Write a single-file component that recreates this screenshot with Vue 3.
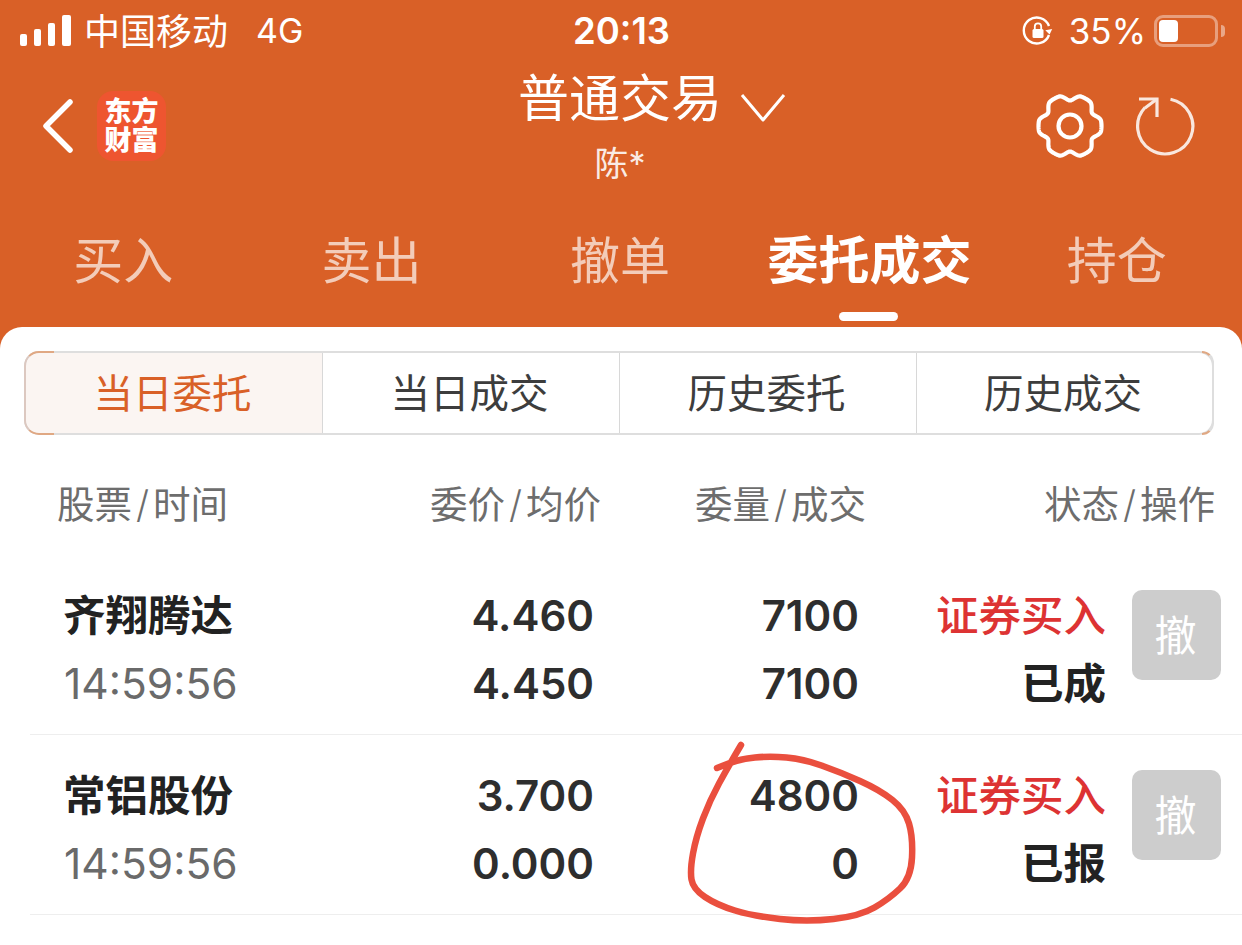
<script setup>
const tabs = [
  { label: '买入' },
  { label: '卖出' },
  { label: '撤单' },
  { label: '委托成交', active: true },
  { label: '持仓' },
]
const segments = ['当日委托', '当日成交', '历史委托', '历史成交']
const orders = [
  { name: '齐翔腾达', time: '14:59:56', price: '4.460', avg: '4.450', qty: '7100', done: '7100', type: '证券买入', status: '已成' },
  { name: '常铝股份', time: '14:59:56', price: '3.700', avg: '0.000', qty: '4800', done: '0', type: '证券买入', status: '已报' },
]

// gear outline: six flat topped teeth, sloping down to the valleys
const gearPath = (() => {
  const pts = []
  const step = Math.PI / 3
  for (let i = 0; i < 240; i++) {
    const a = (i / 240) * Math.PI * 2
    const d = Math.abs(a - Math.round(a / step) * step)
    const t = Math.min(1, Math.max(0, (Math.PI / 6 - d) / (Math.PI / 8.5)))
    const r = 25.5 + 6 * t * t * (3 - 2 * t)
    pts.push(`${(35 + r * Math.cos(a)).toFixed(2)} ${(35 + r * Math.sin(a)).toFixed(2)}`)
  }
  return 'M' + pts.join('L') + 'Z'
})()

// hand drawn ring, smoothed through the midpoints
const ringPoints = [[741, 745], [728, 767], [710, 800], [696, 837], [690, 870], [693, 889], [717, 905], [753, 916], [807, 922], [860, 916], [889, 899], [911, 878], [913, 837], [905, 810], [880, 790], [840, 772], [803, 759], [770, 756], [740, 759], [717, 768]]
const ringPath = ringPoints.reduce((d, p, i, all) => {
  if (i === 0) return `M${p[0]} ${p[1]}`
  if (i === all.length - 1) return `${d}L${p[0]} ${p[1]}`
  const next = all[i + 1]
  return `${d}Q${p[0]} ${p[1]} ${(p[0] + next[0]) / 2} ${(p[1] + next[1]) / 2}`
}, '')
</script>

<template>
  <div class="page">
    <header class="top">
      <div class="status-bar">
        <div class="status-left">
          <div class="signal"><i></i><i></i><i></i><i></i></div>
          <span class="carrier">中国移动</span>
          <span class="net">4G</span>
        </div>
        <div class="clock">20:13</div>
        <div class="status-right">
          <svg class="lock" width="32" height="32" viewBox="0 0 32 32">
            <path d="M27 20A13 13 0 1 1 27 11" fill="none" stroke="#fff" stroke-width="2.4" />
            <path d="M23.5 14.5h7l-3.5 5z" fill="#fff" transform="rotate(-10 27 16)" />
            <rect x="10.5" y="14" width="11" height="9" rx="1.5" fill="#fff" />
            <path d="M12.8 14v-2.4a3.2 3.2 0 0 1 6.4 0V14" fill="none" stroke="#fff" stroke-width="1.8" />
          </svg>
          <span class="percent">35%</span>
          <div class="battery"><div class="battery-fill"></div></div>
          <div class="battery-nub"></div>
        </div>
      </div>

      <div class="nav">
        <div class="nav-left">
          <svg class="back" width="34" height="56" viewBox="0 0 34 56">
            <path d="M29 4 5 28l24 24" fill="none" stroke="#fff" stroke-width="5.5" stroke-linecap="round" stroke-linejoin="round" />
          </svg>
          <div class="logo"><span class="logo-text">东方财富</span></div>
        </div>
        <div class="nav-title">
          <div class="title">
            普通交易
            <svg class="caret" width="48" height="32" viewBox="0 0 48 32">
              <path d="M3 3l21 25L45 3" fill="none" stroke="#fff" stroke-width="3" stroke-linejoin="round" />
            </svg>
          </div>
          <div class="account">陈*</div>
        </div>
        <div class="nav-right">
          <svg width="70" height="70" viewBox="0 0 70 70">
            <path :d="gearPath" fill="none" stroke="#fff" stroke-width="4.2" stroke-linejoin="round" />
            <circle cx="35" cy="35" r="11.5" fill="none" stroke="#fff" stroke-width="4.2" />
          </svg>
          <svg class="refresh" width="62" height="62" viewBox="0 0 62 62">
            <path d="M37.5 4.2A27.6 27.6 0 1 1 12 12.5" fill="none" stroke="#fff" stroke-width="3.2" />
            <path d="M6 4h18v18" fill="none" stroke="#fff" stroke-width="3.2" />
            <path d="M24 4 12 13" fill="none" stroke="#fff" stroke-width="3.2" />
          </svg>
        </div>
      </div>

      <nav class="tabs">
        <div v-for="tab in tabs" :key="tab.label" class="tab" :class="{ active: tab.active }">{{ tab.label }}</div>
      </nav>
    </header>

    <main class="card">
      <div class="segments">
        <div v-for="(seg, i) in segments" :key="seg" class="segment" :class="{ on: i === 0 }">{{ seg }}</div>
      </div>

      <div class="table-head">
        <div>股票<span class="slash">/</span>时间</div>
        <div class="r">委价<span class="slash">/</span>均价</div>
        <div class="r">委量<span class="slash">/</span>成交</div>
        <div class="r">状态<span class="slash">/</span>操作</div>
      </div>

      <div v-for="o in orders" :key="o.name" class="order">
        <div class="order-cols">
          <div>
            <div class="line name">{{ o.name }}</div>
            <div class="line time">{{ o.time }}</div>
          </div>
          <div class="r">
            <div class="line num">{{ o.price }}</div>
            <div class="line num">{{ o.avg }}</div>
          </div>
          <div class="r">
            <div class="line num">{{ o.qty }}</div>
            <div class="line num">{{ o.done }}</div>
          </div>
          <div class="r">
            <div class="line type">{{ o.type }}</div>
            <div class="line state">{{ o.status }}</div>
          </div>
          <div class="cancel">撤</div>
        </div>
      </div>
    </main>

    <svg class="ink" width="1242" height="945" viewBox="0 0 1242 945">
      <path :d="ringPath" fill="none" stroke="#ea4f3e" stroke-width="6.5" stroke-linecap="round" stroke-linejoin="round" />
    </svg>
  </div>
</template>

<style scoped>
.page {
  position: relative;
  width: 1242px;
  height: 945px;
  overflow: hidden;
  background: #d96027;
  font-family: Inter, "Noto Sans CJK SC", sans-serif;
  color: #222;
}

.top {
  height: 347px;
  margin-bottom: -20px;
  color: #fff;
}

.status-bar {
  display: grid;
  grid-template-columns: 1fr auto 1fr;
  align-items: center;
  height: 62px;
  padding: 0 17px 0 20px;
}

.status-left {
  display: flex;
  align-items: center;
}

.signal {
  display: flex;
  align-items: flex-end;
  gap: 7px;
  height: 32px;
  margin: 0 13px 3px 0;
}

.signal i {
  display: block;
  width: 7px;
  background: #fff;
  border-radius: 2px;
}

.signal i:nth-child(1) { height: 12px; }
.signal i:nth-child(2) { height: 17px; }
.signal i:nth-child(3) { height: 23px; }
.signal i:nth-child(4) { height: 31px; width: 9px; }

.carrier {
  font-size: 36px;
  line-height: 44px;
  padding-top: 2px;
}

.net {
  margin-left: 28px;
  font-size: 34px;
  line-height: 44px;
}

.clock {
  padding-right: 2px;
  font-size: 36.5px;
  font-weight: 600;
  line-height: 44px;
}

.status-right {
  display: flex;
  align-items: center;
  justify-content: flex-end;
}

.lock {
  margin-right: 15px;
}

.percent {
  font-size: 35px;
  line-height: 44px;
  margin-right: 8px;
}

.battery {
  width: 64px;
  height: 32px;
  padding: 2px;
  box-sizing: border-box;
  border: 3px solid rgba(255, 255, 255, 0.4);
  border-radius: 9px;
}

.battery-fill {
  width: 19px;
  height: 100%;
  background: #fff;
  border-radius: 4px;
}

.battery-nub {
  width: 4px;
  height: 12px;
  margin-left: 3px;
  background: rgba(255, 255, 255, 0.45);
  border-radius: 0 4px 4px 0;
}

.nav {
  display: grid;
  grid-template-columns: 1fr auto 1fr;
  height: 128px;
  padding: 0 47px 0 41px;
}

.nav-left {
  display: flex;
  align-items: center;
  height: 128px;
}

.nav-left .back {
  margin-right: 22px;
}

.logo {
  display: flex;
  justify-content: center;
  width: 69px;
  height: 70px;
  padding-top: 6px;
  box-sizing: border-box;
  background: #ee5530;
  border-radius: 16px;
}

.logo-text {
  width: 54px;
  text-align: center;
  font-size: 27px;
  font-weight: 900;
  line-height: 29px;
}

.nav-title {
  text-align: center;
  padding: 8px 0 0 4px;
}

.title {
  position: relative;
  font-size: 51px;
  font-weight: 400;
  line-height: 58px;
}

.caret {
  position: absolute;
  left: 221px;
  top: 22px;
}

.account {
  margin-top: 12px;
  font-size: 34px;
  line-height: 48px;
  opacity: 0.88;
}

.nav-right {
  display: flex;
  align-items: center;
  justify-content: flex-end;
  gap: 28px;
  height: 128px;
}

.refresh {
  opacity: 0.85;
}

.tabs {
  display: grid;
  grid-template-columns: repeat(5, 1fr);
  height: 137px;
}

.tab {
  position: relative;
  padding: 36px 2px 0 0;
  text-align: center;
  font-size: 50px;
  line-height: 70px;
  color: rgba(255, 255, 255, 0.68);
}

.tab.active {
  padding-right: 0;
  color: #fff;
  font-size: 51px;
  font-weight: 700;
}

.tab.active::after {
  content: "";
  position: absolute;
  left: 50%;
  top: 122px;
  width: 59px;
  height: 9px;
  margin-left: -30px;
  background: #fff;
  border-radius: 5px;
}

.card {
  position: relative;
  height: 618px;
  background: #fff;
  border-radius: 22px 22px 0 0;
  padding-top: 24px;
  box-sizing: border-box;
}

.segments {
  position: relative;
  display: grid;
  grid-template-columns: 296px 297px 297px 1fr;
  height: 84px;
  margin: 0 28px 0 24px;
  box-sizing: border-box;
  border: 2px solid #dedede;
  border-radius: 15px;
}

/* the rounded ends of the control carry the accent tint */
.segments::before,
.segments::after {
  content: "";
  position: absolute;
  top: -2px;
  bottom: -2px;
  border: 2px solid #e0a883;
  box-sizing: border-box;
  pointer-events: none;
}

.segments::before {
  left: -2px;
  width: 30px;
  border-right: 0;
  border-left-color: #dcc8c0;
  border-radius: 15px 0 0 15px;
}

.segments::after {
  right: -2px;
  width: 12px;
  border-left: 0;
  border-right-color: #dedede;
  border-radius: 0 15px 15px 0;
}

.segment {
  display: flex;
  align-items: center;
  justify-content: center;
  padding: 0 3px 5px 0;
  font-size: 39.5px;
  color: #3d3d3d;
  box-sizing: border-box;
  border-left: 1px solid #d8d8d8;
}

.segment:first-child {
  border-left: 0;
  border-radius: 14px 0 0 14px;
}

.segment.on {
  background: #fbf5f2;
  color: #d96027;
}

.table-head {
  display: grid;
  grid-template-columns: 344px 200px 265px 349px;
  height: 120px;
  padding: 48px 0 0 57px;
  box-sizing: border-box;
  font-size: 37.5px;
  line-height: 44px;
  color: #6d6d6d;
}

.slash {
  margin: 0 4px;
  font-weight: 300;
}

.r {
  text-align: right;
}

.order {
  margin-left: 30px;
  height: 180px;
  box-sizing: border-box;
  border-bottom: 1px solid #eee;
}

.order-cols {
  display: grid;
  grid-template-columns: 331px 200px 265px 247px 89px;
  padding: 27px 21px 0 33px;
}

.line {
  font-size: 42.5px;
  line-height: 68px;
}

.name {
  font-weight: 700;
}

.time {
  margin-left: 1px;
  color: #6a6a6a;
}

.num {
  font-size: 42px;
  font-weight: 590;
  color: #2e2e2e;
}

.type {
  color: #dd3333;
  font-weight: 500;
}

.state {
  font-weight: 700;
}

.cancel {
  display: flex;
  align-items: center;
  justify-content: center;
  width: 89px;
  height: 90px;
  margin: 8px 0 0 26px;
  padding: 0 2px 6px 0;
  box-sizing: border-box;
  background: #cdcdcd;
  border-radius: 10px;
  color: #fff;
  font-size: 42px;
}

.ink {
  position: absolute;
  left: 0;
  top: 0;
  pointer-events: none;
}
</style>
